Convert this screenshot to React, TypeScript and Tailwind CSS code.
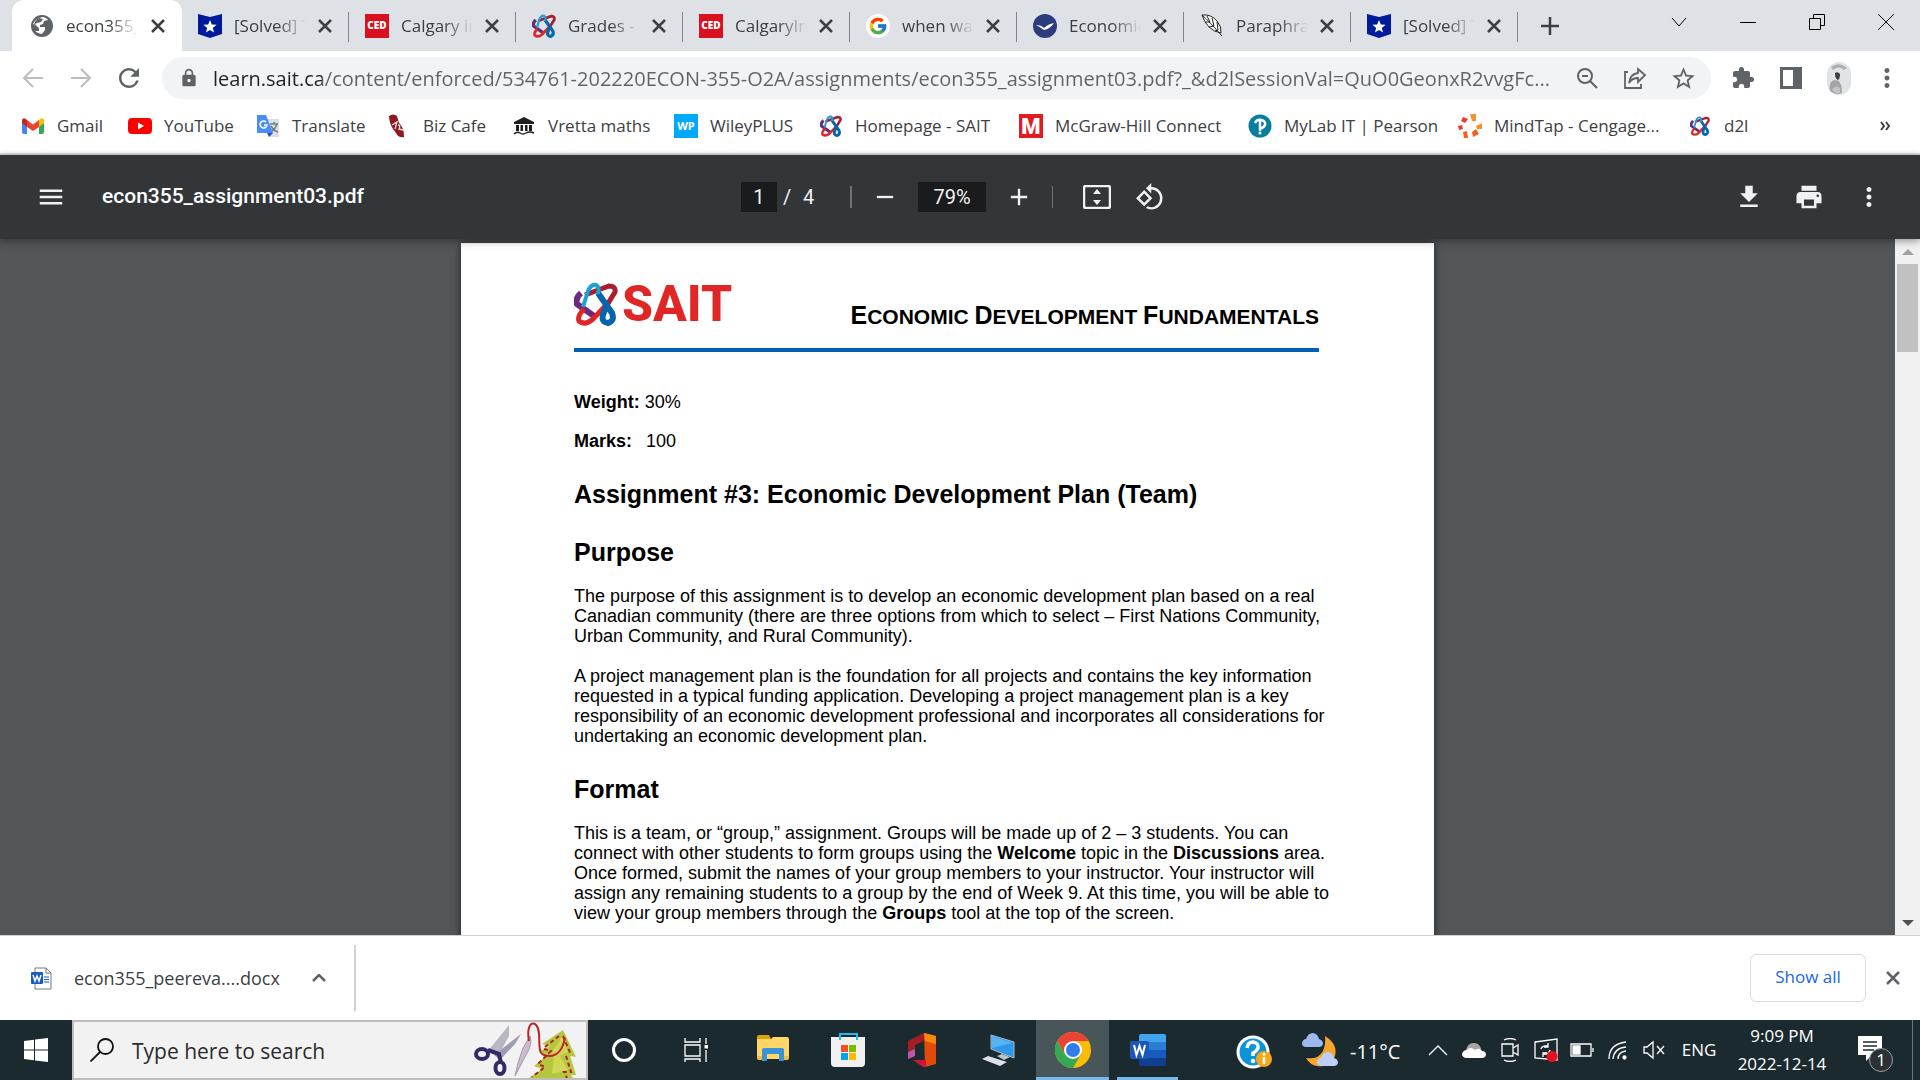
import type { ReactNode } from "react";
import {
  MdAdd,
  MdExtension,
  MdFileDownload,
  MdLock,
  MdMenu,
  MdMoreVert,
  MdPrint,
  MdRefresh,
  MdRemove,
  MdRotate90DegreesCcw,
  MdStarBorder,
} from "react-icons/md";
import { FcGoogle } from "react-icons/fc";

function Knot({ className }: { className: string }) {
  return (
    <svg viewBox="0 0 44 44" fill="none" strokeWidth="5" className={className}>
      <path d="M7 11 Q1 16 3 22 L20 34" stroke="#6b2a7f" strokeWidth="6" />
      <path d="M35 20 L19 37 Q11 44 5 39 Q3 34 10 27" stroke="#e12726" />
      <path d="M11 13 L35 4 Q42 4 41 10 L33 23" stroke="#a81f30" />
      <path d="M24 11 L38 31 Q41 39 34 41 Q27 40 29 33 L33 22" stroke="#0565ad" strokeWidth="6" />
      <path d="M9 25 L14 9 Q17 2 22 3 Q26 5 24 12" stroke="#19a3d4" strokeWidth="4" />
    </svg>
  );
}

function Globe() {
  return (
    <svg viewBox="0 0 24 24" className="size-6">
      <circle cx="12" cy="12" r="11" fill="#5f6368" />
      <path d="M12 3 Q16 3 18 6 L14 7 L13 10 L10 11 L10 13 H15 V16 L12 20 Q8 20 5 17 L9 17 L9 14 L3 10 Q5 5 12 3 Z" fill="#fff" />
      <path d="M9 4 L13 5 L11 8 L7 9 L5 10 L8 13 L4 11 Q5 6 9 4 Z" fill="#5f6368" />
    </svg>
  );
}

function CloseIcon() {
  return (
    <svg viewBox="0 0 20 20" className="size-5" fill="none" stroke="currentColor" strokeWidth="2.500">
      <path d="M4 4 L16 16 M16 4 L4 16" />
    </svg>
  );
}

function Badge() {
  return (
    <svg viewBox="0 0 24 24" className="size-6">
      <path d="M0 0 L12 3 L24 0 V20 L12 24 L0 20 Z" fill="#001a9c" />
      <path d="M12 6 L13.8 10.6 L18.6 10.8 L14.8 13.9 L16.1 18.6 L12 15.9 L7.9 18.6 L9.2 13.9 L5.4 10.8 L10.2 10.6 Z" fill="#fff" />
    </svg>
  );
}

function Ced() {
  return (
    <span className="flex size-6 items-center justify-center bg-[#d9111e] font-['Open_Sans',sans-serif] text-[10px] font-extrabold text-white">
      CED
    </span>
  );
}

function Bird() {
  return (
    <svg viewBox="0 0 24 24" className="size-6">
      <circle cx="12" cy="12" r="12" fill="#2c3c7c" />
      <path d="M3 11 Q8 11 11 14 Q15 10 21 9 Q17 15 11 16 Q7 13 3 11 Z" fill="#fff" />
    </svg>
  );
}

function Feather() {
  return (
    <svg viewBox="0 0 24 24" className="size-6" fill="none" stroke="#222" strokeWidth="1">
      <path d="M2 1 Q11 0 17 7 Q22 13 21 19 Q14 18 9 13 Q4 8 2 1 Z" fill="#fff" />
      <path d="M2 1 Q10 8 22 22 M7 2 L10 8 M12 4 L14 12 M17 8 L18 16 M5 8 L10 8 M9 13 L14 12 M15 17 L18 16" />
    </svg>
  );
}

const TABS = [
  { title: "econ355_", icon: <Globe /> },
  { title: "[Solved] T", icon: <Badge /> },
  { title: "Calgary in", icon: <Ced /> },
  { title: "Grades -", icon: <Knot className="size-6" /> },
  { title: "CalgaryIn", icon: <Ced /> },
  {
    title: "when was",
    icon: (
      <span className="flex size-6 items-center justify-center rounded-full bg-white">
        <FcGoogle className="size-5" />
      </span>
    ),
  },
  { title: "Economic", icon: <Bird /> },
  { title: "Paraphra", icon: <Feather /> },
  { title: "[Solved] T", icon: <Badge /> },
];

const BOOKMARKS = [
  {
    label: "Gmail",
    width: "w-[107px]",
    icon: (
      <svg viewBox="0 0 24 24" className="size-6">
        <path d="M1 20 V6 L6 10 V20 H3 Q1 20 1 18 Z" fill="#4285f4" />
        <path d="M18 20 V10 L23 6 V18 Q23 20 21 20 Z" fill="#34a853" />
        <path d="M18 6 L20 4.500 Q23 3.500 23 7 V9 L18 13 Z" fill="#fbbc04" />
        <path d="M6 6 L12 10.500 L18 6 V13 L12 17 L6 13 Z" fill="#ea4335" />
        <path d="M1 9 V7 Q1 3.500 4 4.500 L6 6 V13 Z" fill="#c5221f" />
      </svg>
    ),
  },
  {
    label: "YouTube",
    width: "w-[128px]",
    icon: (
      <svg viewBox="0 0 24 24" className="size-6">
        <rect y="4" width="24" height="16" rx="4" fill="#f00" />
        <path d="M10 8.500 L16 12 L10 15.500 Z" fill="#fff" />
      </svg>
    ),
  },
  {
    label: "Translate",
    width: "w-[131px]",
    icon: (
      <svg viewBox="0 0 24 24" className="size-6">
        <path d="M9 5 H23 V23 H14 Z" fill="#dcdfe3" />
        <path d="M14 10 H22 M18 8 V10 M21 10 Q19 16 14 18 M15 12 Q18 17 22 18" fill="none" stroke="#6a7f8c" strokeWidth="1.500" />
        <path d="M1 1 H10 L17 19 H1 Z" fill="#4a8cf5" />
        <path d="M11 19 H17 L13 23 Z" fill="#2a4fc0" />
        <path d="M10 8 A3.500 3.500 0 1 0 11 11 H8" fill="none" stroke="#fff" strokeWidth="1.500" />
      </svg>
    ),
  },
  {
    label: "Biz Cafe",
    width: "w-[125px]",
    icon: (
      <svg viewBox="0 0 24 24" className="size-6">
        <path d="M2 2 Q6 -1 10 2 L12 9 Q17 13 17 23 Q11 24 9 19 Q2 11 2 2 Z" fill="#8b1a22" />
        <path d="M5 11 L10 8 L8 15 M11 11 Q14 11 12 15 L16 16" fill="none" stroke="#f3e4e4" strokeWidth="1.300" />
      </svg>
    ),
  },
  {
    label: "Vretta maths",
    width: "w-[162px]",
    icon: (
      <svg viewBox="0 0 24 24" className="size-6" fill="#1f1f1f">
        <path d="M12 3 L22 8 V10 H2 V8 Z M4 11 H7 V17 H4 Z M8.500 11 H11 V17 H8.500 Z M13 11 H15.500 V17 H13 Z M17 11 H20 V17 H17 Z" />
        <path d="M2 20 Q5 17 8 19 T14 19 T22 19" fill="none" stroke="#1f1f1f" strokeWidth="1.500" />
      </svg>
    ),
  },
  {
    label: "WileyPLUS",
    width: "w-[145px]",
    icon: (
      <span className="flex size-6 items-center justify-center bg-[#00a9fb] text-[11px] font-bold text-white">
        WP
      </span>
    ),
  },
  { label: "Homepage - SAIT", width: "w-[200px]", icon: <Knot className="size-6 p-px" /> },
  {
    label: "McGraw-Hill Connect",
    width: "w-[229px]",
    icon: (
      <span className="flex size-6 items-center justify-center bg-[#e21b23] font-['Roboto',sans-serif] text-[22px] font-black text-white">
        M
      </span>
    ),
  },
  {
    label: "MyLab IT | Pearson",
    width: "w-[210px]",
    icon: (
      <svg viewBox="0 0 24 24" className="size-6">
        <circle cx="12" cy="12" r="11.500" fill="#087fa0" />
        <path d="M7 9 Q9 5 13 6 Q18 7 17 11 Q15 15 11 14 M12 7 V17" fill="none" stroke="#fff" strokeWidth="2.500" />
        <circle cx="12" cy="19" r="1.500" fill="#fff" />
      </svg>
    ),
  },
  {
    label: "MindTap - Cengage...",
    width: "w-[230px]",
    icon: (
      <svg viewBox="0 0 24 24" className="size-6">
        <path d="M12 0 H18 V7 H14 Z M18 12 L24 9 V15 L19 15 Z" fill="#f5912c" />
        <path d="M14 18 L18 15 L21 20 L15 23 Z M5 18 L9 17 L10 24 H6 Z" fill="#f26322" />
        <path d="M5 3 L10 5 L7 9 L3 7 Z M0 12 L4 11 L5 15 L1 16 Z" fill="#ec3a2d" />
      </svg>
    ),
  },
  { label: "d2l", width: "w-[80px]", icon: <Knot className="size-6 p-0.5" /> },
];

function TabStrip() {
  return (
    <div className="flex h-[51px] items-start bg-[#dee1e6] pl-3">
      {TABS.map((tab, index) => (
        <div
          key={index}
          className={
            index === 0
              ? "relative flex h-[51px] w-[170px] items-center rounded-t-xl bg-white pr-3.5 pl-[18px]"
              : "relative flex h-[51px] w-[167px] items-center pr-3.5 pl-4"
          }
        >
          {tab.icon}
          <span className="ml-3 w-[72px] overflow-hidden [mask-image:linear-gradient(90deg,#000_60%,transparent)] text-[17px] whitespace-nowrap text-[#3c4043]">
            {tab.title}
          </span>
          <button aria-label="Close tab" className="ml-auto text-[#3c4043]">
            <CloseIcon />
          </button>
          {index > 0 && <i className="absolute top-3 right-0 h-[30px] w-px bg-[#80868b]" />}
        </div>
      ))}
      <button aria-label="New tab" className="ml-3.5 flex h-[51px] w-9 items-center justify-center text-[#3c4043]">
        <svg viewBox="0 0 18 18" className="size-[18px]" fill="none" stroke="currentColor" strokeWidth="2.500">
          <path d="M9 0 V18 M0 9 H18" />
        </svg>
      </button>
      <div className="ml-auto flex h-[43px] items-center">
        <WindowButton label="Search tabs">
          <path d="M2 5 L9 13 L16 5" />
        </WindowButton>
        <WindowButton label="Minimize">
          <path d="M1 9.500 H17" />
        </WindowButton>
        <WindowButton label="Restore">
          <path d="M1.500 5.500 H12.500 V16.500 H1.500 Z M5.500 5 V1.500 H16.500 V12.500 H13" />
        </WindowButton>
        <WindowButton label="Close">
          <path d="M1 1 L17 17 M17 1 L1 17" />
        </WindowButton>
      </div>
    </div>
  );
}

function WindowButton({ label, children }: { label: string; children: ReactNode }) {
  return (
    <button aria-label={label} className="flex h-full w-[69px] items-center justify-center">
      <svg viewBox="0 0 18 18" className="size-[18px]" fill="none" stroke="#000" strokeWidth="1">
        {children}
      </svg>
    </button>
  );
}

function ToolbarButton({ label, children }: { label: string; children: ReactNode }) {
  return (
    <button aria-label={label} className="flex w-12 items-center justify-center">
      {children}
    </button>
  );
}

function AddressBar() {
  return (
    <div className="flex h-[54px] items-center bg-white px-[9px] text-[#5f6368]">
      <ToolbarButton label="Back">
        <svg viewBox="0 0 22 22" className="size-[22px]" fill="none" stroke="#babcbe" strokeWidth="2">
          <path d="M21 11 H2 M11 2 L2 11 L11 20" />
        </svg>
      </ToolbarButton>
      <ToolbarButton label="Forward">
        <svg viewBox="0 0 22 22" className="size-[22px]" fill="none" stroke="#babcbe" strokeWidth="2">
          <path d="M1 11 H20 M11 2 L20 11 L11 20" />
        </svg>
      </ToolbarButton>
      <ToolbarButton label="Reload">
        <MdRefresh className="size-[30px]" />
      </ToolbarButton>
      <div className="ml-[9px] flex h-[42px] flex-1 items-center rounded-full bg-[#f1f3f4] pr-1 pl-[17px]">
        <MdLock className="size-5" />
        <input
          aria-label="Address"
          className="ml-3.5 h-[42px] min-w-0 flex-1 bg-[linear-gradient(90deg,#202124_109px,#5f6368_109px)] bg-clip-text text-[20px] text-transparent outline-none"
          defaultValue="learn.sait.ca/content/enforced/534761-202220ECON-355-O2A/assignments/econ355_assignment03.pdf?_&d2lSessionVal=QuO0GeonxR2vvgFc..."
        />
        <ToolbarButton label="Zoom">
          <svg viewBox="0 0 22 22" className="size-[22px]" fill="none" stroke="currentColor" strokeWidth="2">
            <circle cx="9" cy="9" r="7" />
            <path d="M14 14 L21 21 M6 9 H12" />
          </svg>
        </ToolbarButton>
        <ToolbarButton label="Share">
          <svg viewBox="0 0 24 24" className="size-6" fill="none" stroke="currentColor" strokeWidth="1.800">
            <path d="M5 6 H2 V22 H18 V18" />
            <path d="M6 17 Q7 8 15 7 V3 L22 9 L15 16 V12 Q9 12 6 17 Z" />
          </svg>
        </ToolbarButton>
        <ToolbarButton label="Bookmark this page">
          <MdStarBorder className="size-[27px]" />
        </ToolbarButton>
      </div>
      <div className="ml-2 flex items-center">
        <ToolbarButton label="Extensions">
          <MdExtension className="size-6" />
        </ToolbarButton>
        <ToolbarButton label="Side panel">
          <svg viewBox="0 0 22 22" className="size-[22px]">
            <path d="M0 0 H22 V22 H0 Z M3 3 V19 H13 V3 Z" fill="currentColor" fillRule="evenodd" />
          </svg>
        </ToolbarButton>
        <ToolbarButton label="Profile">
          <svg viewBox="0 0 24 33" className="h-[33px] w-6">
            <rect width="24" height="33" rx="12" fill="#e2e3e5" />
            <path d="M4 5 Q12 -1 20 6 L17 8 Q12 3 6 8 Z" fill="#aeb0b2" />
            <path d="M3 29 Q1 19 8 18 Q15 18 15 31 Q9 34 3 29 Z" fill="#a4a5a7" />
            <path d="M5 28 Q8 22 13 26 V31 Q9 33 5 28 Z" fill="#c4c4c4" />
            <path d="M8 11 Q11 9 13 12 Q13 17 11 18 Q8 17 8 11 Z" fill="#3c3e40" />
          </svg>
        </ToolbarButton>
        <ToolbarButton label="Menu">
          <MdMoreVert className="size-[30px]" />
        </ToolbarButton>
      </div>
    </div>
  );
}

function BookmarksBar() {
  return (
    <nav className="flex h-[50px] items-center border-b-2 border-[#dadce0] bg-white pb-1.5 pl-[21px] text-[17px] text-[#3c4043]">
      {BOOKMARKS.map((item) => (
        <a key={item.label} href="#" className={`flex shrink-0 items-center gap-3 whitespace-nowrap ${item.width}`}>
          {item.icon}
          {item.label}
        </a>
      ))}
      <button aria-label="More bookmarks" className="mr-[30px] ml-auto">
        <svg viewBox="0 0 10 10" className="size-2.5" fill="none" stroke="#3c4043" strokeWidth="2">
          <path d="M1 1 L4 5 L1 9 M6 1 L9 5 L6 9" />
        </svg>
      </button>
    </nav>
  );
}

function PdfToolbar() {
  return (
    <div className="relative z-10 flex h-[84px] items-center bg-[#323639] px-9 font-['Roboto',sans-serif] text-[20px] text-[#f1f1f1] shadow-[0_2px_8px_rgba(0,0,0,0.4)]">
      <div className="flex flex-1 items-center">
        <button aria-label="Menu">
          <MdMenu className="size-[30px]" />
        </button>
        <h1 className="ml-9 text-[21px] font-medium text-white">econ355_assignment03.pdf</h1>
      </div>
      <div className="mr-3.5 flex items-center">
        <input
          aria-label="Page number"
          className="h-[30px] w-9 bg-[#191b1c] text-center outline-none"
          defaultValue="1"
        />
        <span className="ml-1.5 w-5">/</span>
        <span>4</span>
        <i className="ml-9 h-[22px] w-0.5 bg-[#6f7274]" />
        <button aria-label="Zoom out" className="ml-[19px]">
          <MdRemove className="size-7" />
        </button>
        <input
          aria-label="Zoom level"
          className="ml-[19px] h-[30px] w-[68px] bg-[#191b1c] text-center outline-none"
          defaultValue="79%"
        />
        <button aria-label="Zoom in" className="ml-[19px]">
          <MdAdd className="size-7" />
        </button>
        <i className="ml-[19px] h-[22px] w-px bg-[#6f7274]" />
        <button aria-label="Fit to page" className="ml-[30px]">
          <svg viewBox="0 0 28 24" className="h-6 w-7">
            <rect x="1" y="1" width="26" height="22" rx="2" fill="none" stroke="currentColor" strokeWidth="2.500" />
            <path d="M14 4 L18 9 H10 Z M14 20 L18 15 H10 Z" fill="currentColor" />
          </svg>
        </button>
        <button aria-label="Rotate" className="ml-6">
          <MdRotate90DegreesCcw className="size-[30px]" />
        </button>
      </div>
      <div className="flex flex-1 items-center justify-end gap-[30px]">
        <button aria-label="Download">
          <MdFileDownload className="size-[30px]" />
        </button>
        <button aria-label="Print">
          <MdPrint className="size-[30px]" />
        </button>
        <button aria-label="More">
          <MdMoreVert className="size-[30px]" />
        </button>
      </div>
    </div>
  );
}

function DocumentPage() {
  return (
    <article className="h-fit w-[973px] shrink-0 bg-white pt-[39px] pr-[115px] pl-[113px] font-['Liberation_Sans',Arial,sans-serif] text-[18px] leading-5 whitespace-nowrap text-black shadow-[0_0_8px_rgba(0,0,0,0.6)]">
      <header className="flex h-[70px] items-start justify-between border-b-4 border-[#005eb8]">
        <div className="flex items-center gap-1">
          <Knot className="size-11" />
          <span className="font-['Roboto',sans-serif] text-[50px] leading-[44px] font-extrabold text-[#e12726]">
            SAIT
          </span>
        </div>
        <p className="mt-[18px] text-[21px] leading-[30px] font-bold">
          <span className="text-[25px]">E</span>CONOMIC <span className="text-[25px]">D</span>EVELOPMENT{" "}
          <span className="text-[25px]">F</span>UNDAMENTALS
        </p>
      </header>
      <p className="mt-10">
        <b>Weight:</b> 30%
      </p>
      <p className="mt-[19px]">
        <b>Marks:</b>
        <span className="ml-3.5">100</span>
      </p>
      <h2 className="mt-7 text-[25px] leading-[30px] font-bold">
        Assignment #3: Economic Development Plan (Team)
      </h2>
      <h2 className="mt-7 text-[25px] leading-[30px] font-bold">Purpose</h2>
      <p className="mt-[19px]">
        The purpose of this assignment is to develop an economic development plan based on a real
        <br />
        Canadian community (there are three options from which to select – First Nations Community,
        <br />
        Urban Community, and Rural Community).
      </p>
      <p className="mt-5">
        A project management plan is the foundation for all projects and contains the key information
        <br />
        requested in a typical funding application. Developing a project management plan is a key
        <br />
        responsibility of an economic development professional and incorporates all considerations for
        <br />
        undertaking an economic development plan.
      </p>
      <h2 className="mt-7 text-[25px] leading-[30px] font-bold">Format</h2>
      <p className="mt-[19px] pb-10">
        This is a team, or “group,” assignment. Groups will be made up of 2 – 3 students. You can
        <br />
        connect with other students to form groups using the <b>Welcome</b> topic in the <b>Discussions</b> area.
        <br />
        Once formed, submit the names of your group members to your instructor. Your instructor will
        <br />
        assign any remaining students to a group by the end of Week 9. At this time, you will be able to
        <br />
        view your group members through the <b>Groups</b> tool at the top of the screen.
      </p>
    </article>
  );
}

function Viewer() {
  return (
    <main className="flex min-h-0 flex-1 overflow-hidden bg-[#525659]">
      <div className="flex flex-1 justify-center pt-1">
        <DocumentPage />
      </div>
      <div className="flex w-[25px] flex-col items-center bg-[#f1f1f1]">
        <span className="flex h-[25px] items-center">
          <svg viewBox="0 0 12 6" className="h-1.5 w-3">
            <path d="M6 0 L12 6 H0 Z" fill="#a3a3a3" />
          </svg>
        </span>
        <span className="h-[88px] w-[21px] bg-[#c1c1c1]" />
        <span className="mt-auto flex h-[25px] items-center">
          <svg viewBox="0 0 12 6" className="h-1.5 w-3">
            <path d="M0 0 H12 L6 6 Z" fill="#505050" />
          </svg>
        </span>
      </div>
    </main>
  );
}

function DownloadBar() {
  return (
    <div className="flex h-[85px] items-center border-t border-[#d0d1d3] bg-white px-[17px] text-[#3c4043]">
      <svg viewBox="0 0 21 23" className="ml-3.5 h-[23px] w-[21px]">
        <path d="M4 1 H15 L20 6 V22 H4 Z M15 1 V6 H20" fill="#fff" stroke="#777" />
        <path d="M13 10 H18 M13 12.500 H18 M13 15 H18" stroke="#185abd" />
        <rect y="5" width="12" height="12" rx="1" fill="#185abd" />
        <path d="M2 8 L4 14 L6 9 L8 14 L10 8" fill="none" stroke="#fff" strokeWidth="1.500" />
      </svg>
      <span className="ml-[22px] w-[208px] text-[18px] whitespace-nowrap">econ355_peereva....docx</span>
      <button aria-label="Download options" className="ml-[30px]">
        <svg viewBox="0 0 14 8" className="h-2 w-3.5" fill="none" stroke="#5f6368" strokeWidth="2.500">
          <path d="M1 7 L7 1 L13 7" />
        </svg>
      </button>
      <i className="ml-7 h-[66px] w-0.5 bg-[#cfd1d3]" />
      <button className="ml-auto h-12 w-[116px] rounded-md border border-[#dadce0] pb-0.5 text-[17px] font-medium text-[#1a66e8]">
        Show all
      </button>
      <button aria-label="Close downloads bar" className="ml-[17px] text-[#5f6368]">
        <CloseIcon />
      </button>
    </div>
  );
}

function SearchArt() {
  return (
    <svg viewBox="0 0 106 56" className="h-14 w-[106px]" fill="none">
      <path d="M16 29 L37 3 L37 14 L26 34 Z" fill="#b9b6c6" />
      <path d="M22 33 L49 12 L43 22 L28 38 Z" fill="#9f9bb2" />
      <path d="M16 28 L27 32 L29 41" stroke="#332a66" strokeWidth="4" />
      <ellipse cx="10" cy="32" rx="6" ry="5" stroke="#332a66" strokeWidth="4" />
      <ellipse cx="28" cy="46" rx="4.500" ry="6" stroke="#332a66" strokeWidth="4" />
      <path d="M58 14 Q61 22 54 33 L43 54 Q45 42 51 26 Z" fill="#c9bccf" stroke="#a697b0" />
      <path d="M91 8 L104 35 L98 34 L104 53 H99 L101 56 H57 L70 47 L62 44 L74 34 L68 29 L78 24 L70 22 Z" fill="#b5c73c" />
      <path d="M90 14 L96 30 L88 34 L96 48 L80 52 L82 30 L76 33 L86 22 Z" fill="#e0dd60" opacity=".7" />
      <path d="M87 14 L73 25 M91 14 L99 33 M72 27 L79 29 L66 42 L73 45 L60 55 M94 34 L99 50 H92 L95 56" stroke="#b01f24" strokeWidth="2" strokeDasharray="4 3" />
      <path d="M57 19 C53 -2 66 -4 67 12 C68 26 65 34 78 34 C86 34 91 26 93 16" stroke="#b8262a" strokeWidth="2" />
    </svg>
  );
}

function TrayIcon({ label, children }: { label: string; children: ReactNode }) {
  return (
    <button aria-label={label} className="flex w-9 items-center justify-center">
      <svg viewBox="0 0 24 24" className="size-6" fill="none" stroke="#fff" strokeWidth="1.300">
        {children}
      </svg>
    </button>
  );
}

const APPS = [
  {
    name: "File Explorer",
    icon: (
      <svg viewBox="0 0 36 36" className="size-9">
        <path d="M2 5 Q2 3 4 3 H14 L16 7 H2 Z" fill="#e0a106" />
        <path d="M2 7 H16 L18 5 H32 Q34 5 34 7 V27 H2 Z" fill="#ffd667" />
        <path d="M7 18 Q7 16 9 16 H27 Q29 16 29 18 V29 H24 V22 H12 V29 H7 Z" fill="#3a93d8" />
        <path d="M2 24 H7 V28 H4 Q2 28 2 26 Z M29 24 H34 V26 Q34 28 32 28 H29 Z" fill="#f0bd3d" />
      </svg>
    ),
  },
  {
    name: "Microsoft Store",
    icon: (
      <svg viewBox="0 0 36 36" className="size-9">
        <path d="M10 8 V2 H27 V8" fill="none" stroke="#20b8f2" strokeWidth="2" />
        <path d="M1 5 H35 V31 Q35 35 31 35 H5 Q1 35 1 31 Z" fill="#f0f0f0" />
        <path d="M10 8 V5 M27 8 V5" stroke="#20b8f2" strokeWidth="2" />
        <path d="M11 13 H18 V20 H11 Z" fill="#f25022" />
        <path d="M19 13 H26 V20 H19 Z" fill="#7fba00" />
        <path d="M11 21 H18 V28 H11 Z" fill="#00a4ef" />
        <path d="M19 21 H26 V28 H19 Z" fill="#ffb900" />
      </svg>
    ),
  },
  {
    name: "Office",
    icon: (
      <svg viewBox="0 0 36 36" className="size-9">
        <path d="M3 9 L19 1 V9 L10 13 V24 L3 27 Z" fill="#a51d24" />
        <path d="M3 20 L10 17 V24 L3 27 Z" fill="#b85aa5" />
        <path d="M19 1 L31 4 V32 L20 35 Z" fill="#e04a0b" />
        <path d="M19 1 L31 4 V12 L20 9 Z" fill="#f58a0c" />
        <path d="M8 28 H21 V35 L18 35 Z" fill="#d2143a" />
      </svg>
    ),
  },
  {
    name: "This PC",
    icon: (
      <svg viewBox="0 0 36 36" className="size-9">
        <path d="M11 3 L34 10 V26 L11 17 Z" fill="#2f98e8" stroke="#a9bcc8" />
        <path d="M12 4 L32 11 L12 16 Z" fill="#55b4f6" />
        <path d="M17 24 L22 22 L30 25 L24 28 Z" fill="#b9c6cc" />
        <path d="M2 27 L8 24 L27 30 L20 34 Z" fill="#dce1e6" />
      </svg>
    ),
  },
  {
    name: "Google Chrome",
    icon: (
      <svg viewBox="0 0 36 36" className="size-9">
        <circle cx="18" cy="18" r="18" fill="#fbbc05" />
        <path d="M2.400 9 A18 18 0 0 1 33.600 9 H18 L10.200 22.500 Z" fill="#ea4335" />
        <path d="M2.400 9 A18 18 0 0 0 18 36 L25.800 22.500 L10.200 22.500 Z" fill="#34a853" />
        <circle cx="18" cy="18" r="9" fill="#fff" />
        <circle cx="18" cy="18" r="7" fill="#2f7de9" />
      </svg>
    ),
  },
  {
    name: "Word",
    icon: (
      <svg viewBox="0 0 36 36" className="size-9">
        <path d="M9 4 Q9 2 11 2 H34 Q36 2 36 4 V10 H9 Z" fill="#41a5ee" />
        <path d="M9 10 H36 V18 H9 Z" fill="#2b7cd3" />
        <path d="M9 18 H36 V26 H9 Z" fill="#185abd" />
        <path d="M9 26 H36 V32 Q36 34 34 34 H11 Q9 34 9 32 Z" fill="#103f91" />
        <rect y="9" width="19" height="18" rx="2" fill="#1b56ba" />
        <path d="M4 13 L6.500 23 L9.500 14 L12.500 23 L15 13" fill="none" stroke="#fff" strokeWidth="2" />
      </svg>
    ),
  },
];

function Taskbar() {
  return (
    <footer className="flex h-[60px] bg-[#1a2a2f] text-white">
      <button aria-label="Start" className="flex w-[72px] items-center justify-center">
        <svg viewBox="0 0 24 24" className="size-6" fill="#fff">
          <path d="M0 3 L10 1.700 V11.500 H0 Z M11 1.500 L24 0 V11.500 H11 Z M0 12.500 H10 V22.300 L0 21 Z M11 12.500 H24 V24 L11 22.500 Z" />
        </svg>
      </button>
      <label className="flex w-[516px] items-center border-2 border-[#bdbdbd] bg-[#f2f2f2] pr-2 pl-4">
        <svg viewBox="0 0 24 24" className="size-6" fill="none" stroke="#111" strokeWidth="1.800">
          <circle cx="15.500" cy="8.500" r="7.500" />
          <path d="M10 14 L0.500 23.500" />
        </svg>
        <input
          aria-label="Search"
          placeholder="Type here to search"
          className="ml-[18px] min-w-0 flex-1 pt-1 text-[21px] text-black outline-none placeholder:text-[#2b2b2b]"
        />
        <SearchArt />
      </label>
      <button aria-label="Cortana" className="flex w-[72px] items-center justify-center">
        <span className="size-6 rounded-full border-3 border-white" />
      </button>
      <button aria-label="Task view" className="flex w-[72px] items-center justify-center">
        <svg viewBox="0 0 24 24" className="size-6" fill="none" stroke="#fff" strokeWidth="1.300">
          <path d="M1 0 V4 H16 V0 M1 7 H16 V18 H1 Z M1 24 V21 H16 V24 M22 0 V6 M22 12 V24" />
          <path d="M20.500 7 H24 V10.500 H20.500 Z" fill="#fff" stroke="none" />
        </svg>
      </button>
      <div className="ml-1 flex gap-0.5">
        {APPS.map((app) => (
          <button
            key={app.name}
            aria-label={app.name}
            className={`relative flex w-[73px] items-center justify-center ${
              app.name === "Google Chrome" ? "bg-[#48565a]" : ""
            }`}
          >
            {app.icon}
            {app.name === "Google Chrome" && <i className="absolute inset-x-0 bottom-0 h-[3px] bg-[#76b9ed]" />}
            {app.name === "Word" && <i className="absolute inset-x-1.5 bottom-0 h-[3px] bg-[#76b9ed]" />}
          </button>
        ))}
      </div>
      <div className="ml-auto flex items-stretch">
        <button aria-label="Get help" className="flex w-[60px] items-center justify-center pt-1">
          <svg viewBox="0 0 36 34" className="h-[34px] w-9">
            <circle cx="17" cy="17" r="16.500" fill="#fff" />
            <circle cx="17" cy="17" r="13.500" fill="#0b95d8" />
            <path d="M11 13 Q12 7 17 7 Q23 8 22 13 Q21 16 17 18 V21" fill="none" stroke="#fff" strokeWidth="3.500" />
            <circle cx="17" cy="26" r="2.300" fill="#fff" />
            <circle cx="28" cy="24" r="8" fill="#f6a81c" />
            <path d="M28 22 V29 M28 18 V20.500" stroke="#fff" strokeWidth="2.500" />
          </svg>
        </button>
        <button className="ml-[18px] flex w-[118px] items-center gap-3 text-[20px]">
          <svg viewBox="0 0 36 36" className="size-9 shrink-0">
            <path d="M23 4 Q36 12 33 24 Q28 36 15 34 Q8 33 4 26 Q16 28 21 19 Q24 12 23 4 Z" fill="#f5a62f" />
            <path d="M4 15 Q0 15 0 11 Q1 7 4 7 Q6 1 11 1 Q16 2 17 7 Q21 8 21 12 Q20 15 17 15 Z" fill="#9dbaf0" />
            <path d="M19 34 Q15 33 15 30 Q16 26 19 26 Q21 20 26 20 Q31 21 32 26 Q36 27 36 31 Q35 34 32 34 Z" fill="#bcd0f7" />
          </svg>
          <span className="pt-1">-11°C</span>
        </button>
        <TrayIcon label="Show hidden icons">
          <path d="M3 17 L12 8 L21 17" />
        </TrayIcon>
        <TrayIcon label="OneDrive">
          <path d="M4 12 Q6 4 13 5 Q18 6 19 11 L8 17 H4 Z" fill="#a7a7a7" stroke="none" />
          <path d="M4 20 Q0 19 0 16 Q1 12 5 12 Q8 8 13 12 Q18 9 20 13 Q24 13 24 17 Q23 20 20 20 Z" fill="#fff" stroke="none" />
        </TrayIcon>
        <TrayIcon label="Meet Now">
          <path d="M4 6 H15 V18 H4 Z M15 10 L20 7 V17 L15 14 M6 2 Q12 -1 18 2 M6 22 Q12 25 18 22" />
        </TrayIcon>
        <TrayIcon label="Update">
          <path d="M1 4 L23 1 V22 L1 20 Z M7 11 Q8 7 14 8 M14 5 V9 H10 M16 12 Q15 17 9 16 M9 19 V15 H13" />
          <circle cx="18" cy="18.500" r="5.500" fill="#e81123" stroke="none" />
        </TrayIcon>
        <TrayIcon label="Battery">
          <path d="M1 6 H21 V18 H1 Z M23 10 V14" />
          <path d="M3 8 H10 V16 H3 Z" fill="#fff" />
        </TrayIcon>
        <TrayIcon label="Wi-Fi">
          <path d="M3 21 Q3 6 20 4 M7 21 Q8 10 20 9 M12 21 Q12 14 20 13" />
          <circle cx="18.500" cy="19.500" r="1.500" fill="#fff" />
        </TrayIcon>
        <TrayIcon label="Volume">
          <path d="M2 9 H5 L11 4 V20 L5 15 H2 Z M15 8 L22 16 M22 8 L15 16" />
        </TrayIcon>
        <button className="w-[54px] text-[17px]">ENG</button>
        <button className="flex w-[112px] flex-col items-center justify-center text-[17px] leading-7 whitespace-nowrap">
          <span>9:09 PM</span>
          <span>2022-12-14</span>
        </button>
        <button aria-label="Notifications" className="w-[75px] border-r border-[#6b7679] pl-5">
          <svg viewBox="0 0 36 36" className="mt-2 size-9">
            <path d="M0 0 H24 V19 H14 L8 25 V19 H0 Z" fill="#fff" />
            <path d="M5 6 H19 M5 10 H19 M5 14 H16" stroke="#1a2a2f" strokeWidth="1.300" />
            <circle cx="23" cy="24" r="11.500" fill="#2a3033" stroke="#9aa1a3" />
            <text x="23" y="30" textAnchor="middle" fontSize="17" fontFamily="Open Sans" fill="#fff">
              1
            </text>
          </svg>
        </button>
        <i className="w-[7px]" />
      </div>
    </footer>
  );
}

export default function App() {
  return (
    <div className="flex h-screen flex-col overflow-hidden font-['Open_Sans',sans-serif]">
      <TabStrip />
      <AddressBar />
      <BookmarksBar />
      <PdfToolbar />
      <Viewer />
      <DownloadBar />
      <Taskbar />
    </div>
  );
}
